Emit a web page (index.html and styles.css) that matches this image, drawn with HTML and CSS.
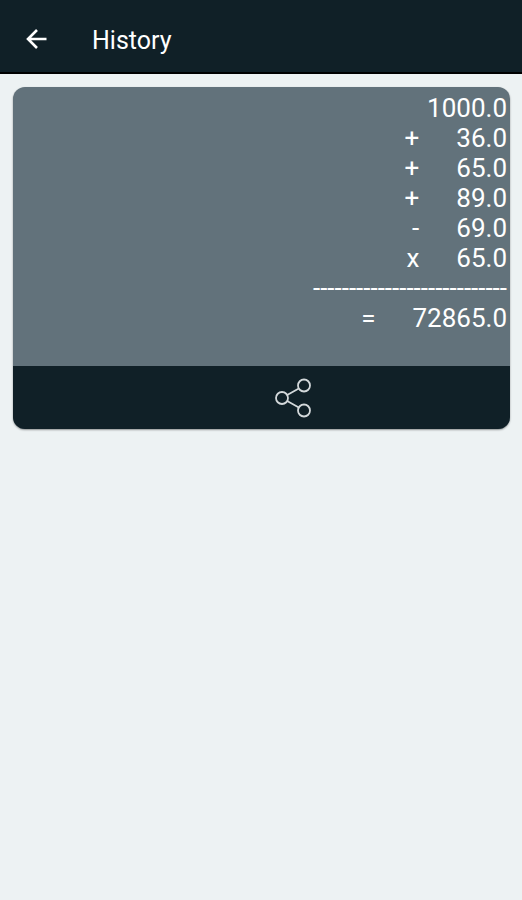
FILE: index.html
```html
<!DOCTYPE html>
<html lang="en">

<head>
    <meta charset="UTF-8">
    <meta name="viewport" content="width=device-width, initial-scale=1.0">
    <title>History</title>
    <link rel="stylesheet" href="styles.css">
</head>

<body>
    <header class="topbar">
        <button class="icon-btn" type="button" aria-label="Back">
            <svg width="24" height="24" viewBox="0 0 24 24" fill="none" stroke="#fff" stroke-width="2.6">
                <path d="M22.5 12H4.5M13 3L4 12l9 9" />
            </svg>
        </button>
        <h1>History</h1>
    </header>

    <main>
        <div class="card">
            <ul class="lines">
                <li><span>1000.0</span></li>
                <li><span>+</span><span>36.0</span></li>
                <li><span>+</span><span>65.0</span></li>
                <li><span>+</span><span>89.0</span></li>
                <li><span>-</span><span>69.0</span></li>
                <li><span>x</span><span>65.0</span></li>
                <li><span>---------------------------</span></li>
                <li><span>=</span><span>72865.0</span></li>
            </ul>
            <div class="actions">
                <button class="icon-btn" type="button" aria-label="Share">
                    <svg width="40" height="40" viewBox="0 0 40 40" fill="none" stroke="#d3d8da" stroke-width="1.8">
                        <circle cx="9" cy="20" r="6" />
                        <circle cx="31" cy="7.5" r="6" />
                        <circle cx="31" cy="32.5" r="6" />
                        <path d="M14.2 17L25.8 10.5M14.2 23L25.8 29.5" />
                    </svg>
                </button>
            </div>
        </div>
    </main>
</body>

</html>
```

FILE: styles.css
```css
* {
    box-sizing: border-box;
}

body {
    margin: 0;
    font-family: Roboto, sans-serif;
    background: #edf2f3;
    color: #fff;
}

.topbar {
    display: flex;
    align-items: center;
    gap: 44px;
    height: 74px;
    padding: 6px 24px 0;
    background: #102027;
    border-bottom: 2px solid #000;
}

h1 {
    margin: 0;
    padding-top: 4px;
    font-size: 25px;
    font-weight: 400;
    line-height: 30px;
}

.icon-btn {
    display: flex;
    padding: 0;
    border: none;
    background: none;
    cursor: pointer;
}

main {
    padding: 13px 12px 13px 13px;
}

.card {
    overflow: hidden;
    border-radius: 12px;
    background: #62727b;
    box-shadow: 0 1px 2px rgba(0, 0, 0, 0.4);
}

.lines {
    margin: 0;
    padding: 6px 3px 33px;
    list-style: none;
    font-size: 26px;
    line-height: 30px;
}

.lines li {
    display: flex;
    justify-content: flex-end;
    gap: 37px;
}

/* share sits right of the middle */
.actions {
    display: flex;
    justify-content: center;
    padding: 12px 0 11px 62px;
    background: #102027;
}
```
